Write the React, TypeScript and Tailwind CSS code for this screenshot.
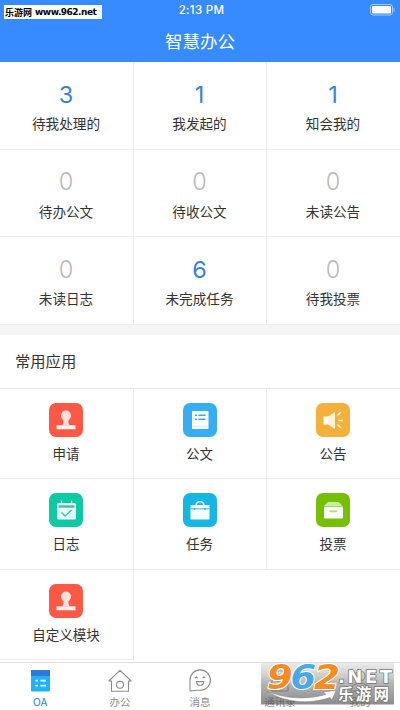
import type { ReactNode } from "react";

const stats = [
  { value: 3, label: "待我处理的" },
  { value: 1, label: "我发起的" },
  { value: 1, label: "知会我的" },
  { value: 0, label: "待办公文" },
  { value: 0, label: "待收公文" },
  { value: 0, label: "未读公告" },
  { value: 0, label: "未读日志" },
  { value: 6, label: "未完成任务" },
  { value: 0, label: "待我投票" },
];

function StampIcon() {
  return (
    <svg viewBox="0 0 34 34" className="h-[34px] w-[34px]">
      <circle cx="17" cy="12.6" r="5" fill="#ffe0da" />
      <path d="M13.5 15h7c-1.6 2.6-1.5 5 .4 7.500h-7.800c1.900-2.500 2-4.900.4-7.500z" fill="#ffe0da" />
      <path d="M7.500 22.300h19v4h-19z" fill="#fff0ed" />
    </svg>
  );
}

function DocIcon() {
  return (
    <svg viewBox="0 0 34 34" className="h-[34px] w-[34px]">
      <rect x="9" y="8" width="16.500" height="18" rx="0.800" fill="#fff" />
      <path d="M9.500 23.500h15.500" stroke="#d3edfc" />
      <path d="M12 12.200h2M15.500 12.200h7M12 16.200h2M15.500 16.200h7" stroke="#3aaaf0" strokeWidth="1.400" />
    </svg>
  );
}

function SpeakerIcon() {
  return (
    <svg viewBox="0 0 34 34" className="h-[34px] w-[34px]">
      <path d="M7.500 13.500h4.500v8H7.500z" fill="#fff" />
      <path d="M12 13.500l7-4.500v17l-7-4.500z" fill="#fff3d8" />
      <path d="M21.500 12.500l3.500-3.500M22.500 17.500h4.500M21.500 21.500l3.500 3.500" stroke="#fff3d8" strokeWidth="1.500" />
    </svg>
  );
}

function CalendarIcon() {
  return (
    <svg viewBox="0 0 34 34" className="h-[34px] w-[34px]">
      <path d="M12.500 7.500v4M22.500 7.500v4" stroke="#d5fff5" strokeWidth="1.400" />
      <rect x="8" y="10" width="19" height="16.500" rx="1.500" fill="#e2fff8" />
      <path d="M9.500 13.500h16" stroke="#56b698" strokeWidth="2.400" />
      <path d="M12.500 19.500l3.500 3.500 6.500-6" fill="none" stroke="#3bc49e" strokeWidth="1.300" />
    </svg>
  );
}

function BriefcaseIcon() {
  return (
    <svg viewBox="0 0 34 34" className="h-[34px] w-[34px]">
      <path d="M13 13c0-2.800 1.500-4.300 4-4.300s4 1.500 4 4.300" fill="none" stroke="#d8f7ff" strokeWidth="1.500" />
      <rect x="7.500" y="12" width="19" height="14.500" rx="0.800" fill="#f4fdff" />
      <path d="M7.500 15.800h19" stroke="#4fafc7" strokeWidth="1" />
      <path d="M11.500 15v2M22 15v2" stroke="#4fafc7" strokeWidth="1.500" />
    </svg>
  );
}

function BoxIcon() {
  return (
    <svg viewBox="0 0 34 34" className="h-[34px] w-[34px]">
      <path d="M12 9h10.500l4.500 4.500H7.500z" fill="#c9efa0" />
      <rect x="8" y="14" width="19" height="11.500" rx="0.800" fill="#fff" />
      <path d="M13.500 18.300h7.500" stroke="#b7dd88" strokeWidth="2" />
    </svg>
  );
}

const apps = [
  { label: "申请", color: "bg-[#fb5846]", icon: <StampIcon /> },
  { label: "公文", color: "bg-[#37aef4]", icon: <DocIcon /> },
  { label: "公告", color: "bg-[#f3b13c]", icon: <SpeakerIcon /> },
  { label: "日志", color: "bg-[#0dcaa2]", icon: <CalendarIcon /> },
  { label: "任务", color: "bg-[#15b6e3]", icon: <BriefcaseIcon /> },
  { label: "投票", color: "bg-[#75c004]", icon: <BoxIcon /> },
  { label: "自定义模块", color: "bg-[#fb5846]", icon: <StampIcon /> },
];

function Header() {
  return (
    <header className="relative h-[62px] shrink-0 bg-[#388bff] text-white">
      <div className="flex h-[21px] items-center justify-center pl-[3px]">
        <span className="font-['Inter',sans-serif] text-[11.500px] font-medium tracking-[0.300px]">2:13 PM</span>
        <svg viewBox="0 0 25 12" className="absolute right-[5px] top-1 h-3 w-[25px]">
          <rect x="0.500" y="0.500" width="22" height="10.500" rx="2.500" fill="none" stroke="#a4caff" />
          <rect x="2" y="2" width="19" height="7.500" rx="1" fill="#fff" />
          <path d="M24 4v4" stroke="#8fbdff" />
        </svg>
      </div>
      <h1 className="flex h-10 items-center justify-center text-[17.500px]">智慧办公</h1>
      <div className="absolute left-1 top-[5px] flex h-[14px] w-[98px] items-center gap-[3px] whitespace-nowrap bg-white pl-px text-black">
        <span className="text-[9px] font-bold leading-none">乐游网</span>
        <span className="font-['DejaVu_Sans',sans-serif] text-[9px] font-bold leading-none tracking-[-0.500px]">www.962.net</span>
      </div>
    </header>
  );
}

function Tab({ label, active, children }: { label: string; active?: boolean; children: ReactNode }) {
  return (
    <div className={`flex w-20 flex-col items-center pt-[6px] ${active ? "text-[#2c7fdc]" : "text-[#8b8b8b]"}`}>
      {children}
      <span className="mt-[2px] text-[10.500px] leading-[14px]">{label}</span>
    </div>
  );
}

function TabBar() {
  return (
    <nav className="relative flex h-12 shrink-0 border-t border-[#dedede] bg-white">
      <Tab label="OA" active>
        <svg viewBox="0 0 24 24" className="h-6 w-6">
          <rect x="3" y="1" width="19" height="21.500" rx="1" fill="#1eb2f6" />
          <path d="M3 7V2a1 1 0 011-1h17a1 1 0 011 1v5z" fill="#2c79db" />
          <path d="M7.500 11.700h2.500M12.500 11.700h5.500M7.500 16.700h2.500M12.500 16.700h5.500" stroke="#fff" strokeWidth="1.700" />
        </svg>
      </Tab>
      <Tab label="办公">
        <svg viewBox="0 0 24 24" className="h-6 w-6" fill="none" stroke="currentColor" strokeWidth="1.100">
          <path d="M3.500 12H.8L12 1.300 23.200 12h-2.700v10.200h-17z" strokeLinejoin="round" />
          <circle cx="12" cy="15.700" r="3.500" />
        </svg>
      </Tab>
      <Tab label="消息">
        <svg viewBox="0 0 24 24" className="h-6 w-6" fill="none" stroke="currentColor" strokeWidth="1.100">
          <path d="M2 22V11.200A10.200 10.200 0 1112.200 21.300H9L2 22z" strokeLinejoin="round" />
          <path d="M6.800 9.200l1.400-1.200 1.400 1.200M14.600 9.200L16 8l1.400 1.200M8.500 12.600h7.300c-.2 2.300-1.500 3.700-3.600 3.700s-3.500-1.400-3.700-3.700z" />
        </svg>
      </Tab>
      <Tab label="通讯录">
        <svg viewBox="0 0 24 24" className="h-6 w-6" fill="none" stroke="currentColor" strokeWidth="1.100">
          <rect x="4" y="2" width="16" height="20" rx="1" />
          <path d="M2 8h4M2 16h4M9 8h7M9 12h7" />
        </svg>
      </Tab>
      <Tab label="我的">
        <svg viewBox="0 0 24 24" className="h-6 w-6" fill="none" stroke="currentColor" strokeWidth="1.100">
          <circle cx="12" cy="7" r="5" />
          <path d="M3 22c0-5 4-8 9-8s9 3 9 8z" />
        </svg>
      </Tab>
      <Watermark />
    </nav>
  );
}

function Watermark() {
  return (
    <svg viewBox="0 0 133 42" className="absolute left-[261px] top-0 h-[42px] w-[133px] overflow-visible">
      <defs>
        <linearGradient id="shade" x1="0" y1="0" x2="0" y2="1">
          <stop offset="0" stopColor="#bbbbbb" stopOpacity="0.300" />
          <stop offset="0.500" stopColor="#808080" stopOpacity="0.600" />
          <stop offset="1" stopColor="#505050" stopOpacity="0.660" />
        </linearGradient>
      </defs>
      <rect width="133" height="41.500" fill="url(#shade)" />
      <g
        fontFamily="DejaVu Sans, sans-serif"
        fontWeight="bold"
        fontStyle="italic"
        fontSize="33"
        stroke="#fff"
        strokeWidth="2"
        strokeLinejoin="round"
        paintOrder="stroke"
      >
        <text x="6" y="26" textLength="25.500" lengthAdjust="spacingAndGlyphs" fill="#f68b1f">9</text>
        <text x="29.500" y="26" textLength="25.500" lengthAdjust="spacingAndGlyphs" fill="#48a9e6">6</text>
        <text x="53" y="26" textLength="26" lengthAdjust="spacingAndGlyphs" fill="#f68b1f">2</text>
      </g>
      <path d="M6 28C24 36 46 37 65 31.500L62 29l13-1.500-4 9.500-2-2.500C47 42 22 39 6 28z" fill="#fff" stroke="#858585" strokeWidth="0.500" />
      <g fill="#fff" stroke="#777" strokeWidth="1.600" strokeLinejoin="round" paintOrder="stroke" fontWeight="bold">
        <text x="77" y="19.500" fontFamily="DejaVu Sans, sans-serif" fontSize="18" textLength="54" lengthAdjust="spacing">.NET</text>
        <text x="77" y="37" fontFamily="Noto Sans CJK SC, sans-serif" fontSize="15.500" textLength="51">乐游网</text>
      </g>
    </svg>
  );
}

export default function App() {
  return (
    <div className="flex h-[710px] w-[400px] flex-col overflow-hidden bg-white font-['Noto_Sans_CJK_SC',sans-serif] text-[#333]">
      <Header />
      <section className="grid shrink-0 grid-cols-[134px_133px_133px]">
        {stats.map((s) => (
          <div
            key={s.label}
            className="flex h-[87.500px] flex-col items-center border-b border-r border-[#ececec] pt-[20.500px] pr-px [&:nth-child(3n)]:border-r-0"
          >
            <span
              className={`font-['Inter',sans-serif] text-[23.500px] leading-6 ${s.value ? "text-[#3d82cf]" : "font-light text-[#b8b8b8]"}`}
            >
              {s.value}
            </span>
            <span className="mt-[6.500px] text-[13.600px] leading-5">{s.label}</span>
          </div>
        ))}
      </section>
      <div className="h-[10px] shrink-0 bg-[#f4f4f4]" />
      <h2 className="flex h-[54px] shrink-0 items-center border-b border-[#e6e6e6] pb-[2px] pl-[15px] text-[15.300px]">常用应用</h2>
      <section className="grid flex-1 content-start grid-cols-[134px_133px_133px]">
        {apps.map((a) => (
          <div
            key={a.label}
            className="flex h-[90.500px] flex-col items-center border-b border-r border-[#ececec] pt-[14px] pr-px [&:nth-child(3n)]:border-r-0"
          >
            <div className={`h-[34px] w-[34px] rounded-[7px] ${a.color}`}>{a.icon}</div>
            <span className="mt-[6px] text-[13.500px] leading-5">{a.label}</span>
          </div>
        ))}
      </section>
      <TabBar />
    </div>
  );
}
